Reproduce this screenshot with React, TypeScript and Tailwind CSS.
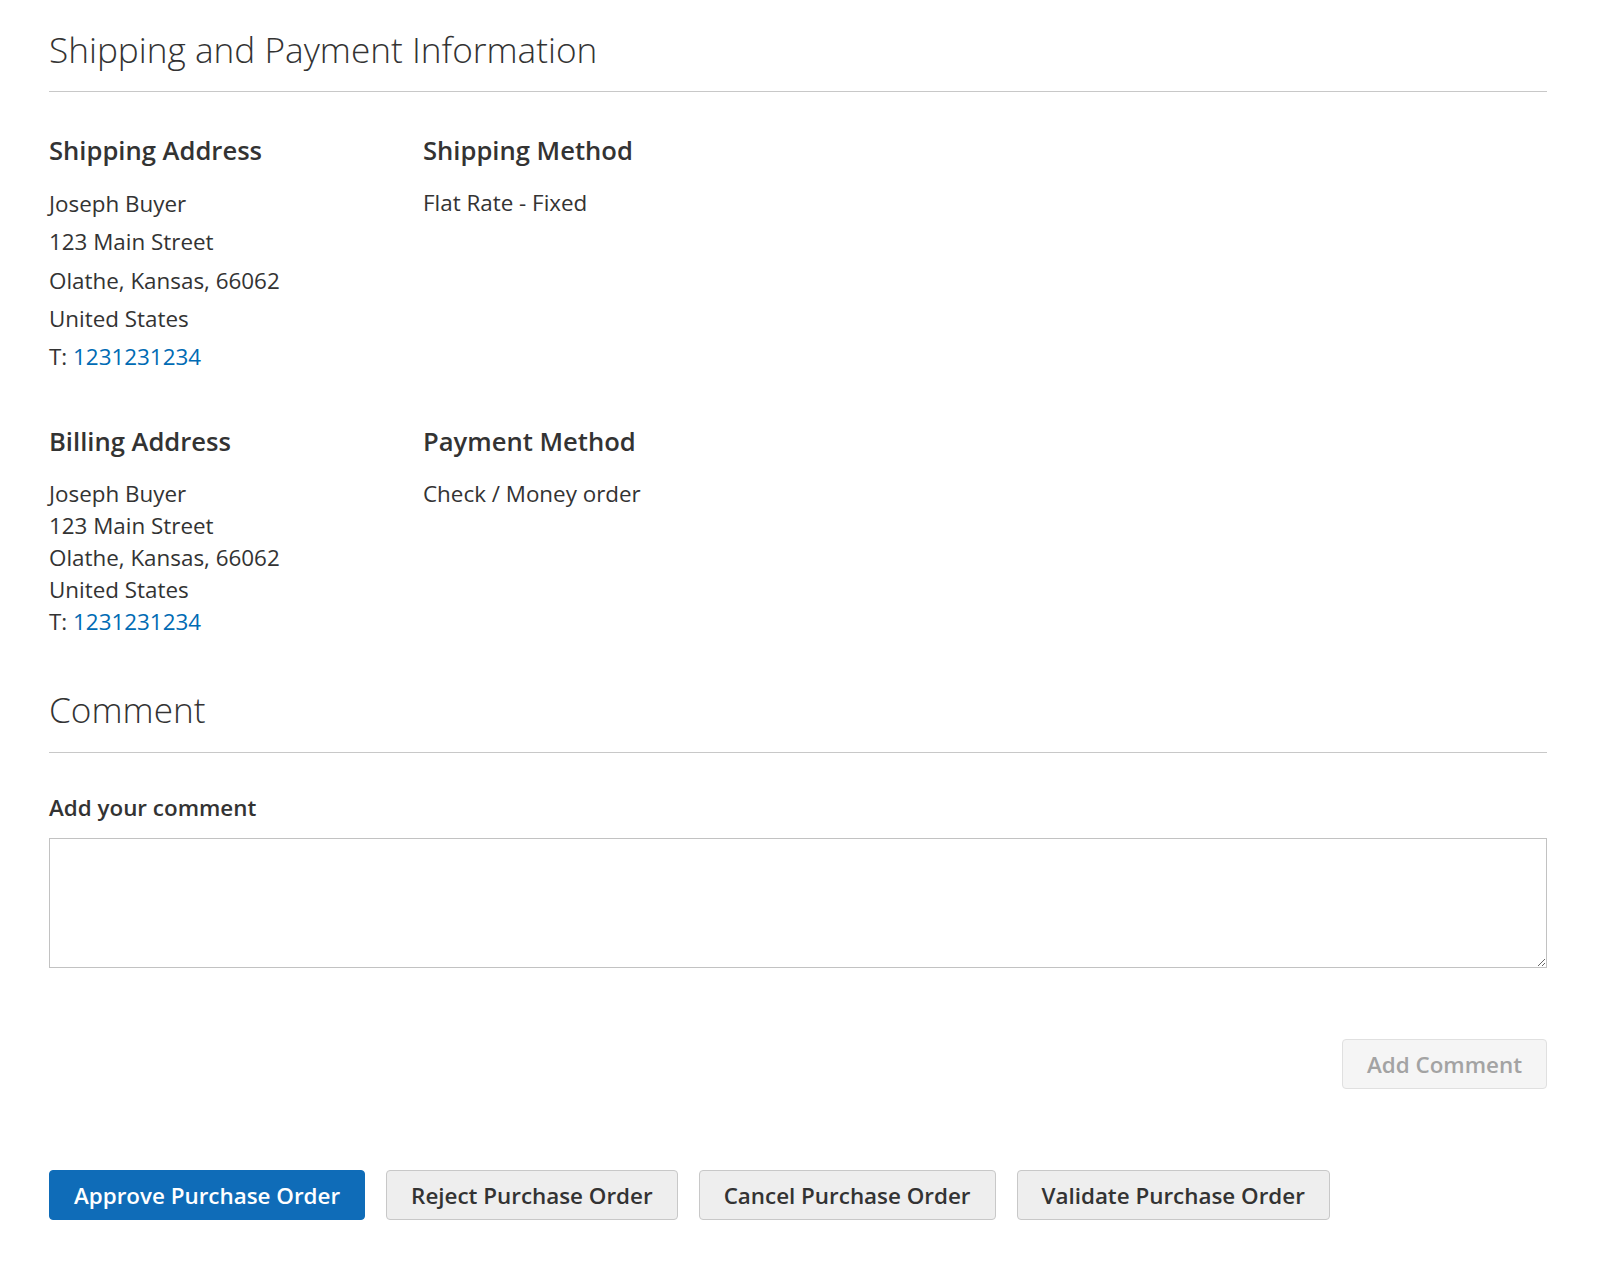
import React from "react";

const font = { fontFamily: '"Open Sans", "Noto Sans", Arial, sans-serif' };

const shipping = ["Joseph Buyer", "123 Main Street", "Olathe, Kansas, 66062", "United States"];

const btn = "h-[50px] px-[24px] rounded-[4px] border text-[22.4px] font-semibold";

export default function App() {
  return (
    <div className="min-h-screen bg-white text-[#333] pl-[49px] pr-[52px] pt-[25px]" style={font}>
      {/* Shipping and payment */}
      <div className="border-b border-[#c8c8c8] pb-[18px]">
        <h1 className="text-[35.2px] leading-[48px] font-light">Shipping and Payment Information</h1>
      </div>

      <div className="flex mt-[43px]">
        <div className="w-[374px]">
          <h2 className="text-[25.6px] leading-[32px] font-semibold">Shipping Address</h2>
          <div className="mt-[18px] text-[22.4px] leading-[38.3px]">
            {shipping.map((l) => (
              <div key={l}>{l}</div>
            ))}
            <div>
              T: <a className="text-[#006bb4]">1231231234</a>
            </div>
          </div>
        </div>
        <div>
          <h2 className="text-[25.6px] leading-[32px] font-semibold">Shipping Method</h2>
          <div className="mt-[17px] text-[22.4px] leading-[38px]">Flat Rate - Fixed</div>
        </div>
      </div>

      <div className="flex mt-[50px]">
        <div className="w-[374px]">
          <h2 className="text-[25.6px] leading-[32px] font-semibold">Billing Address</h2>
          <div className="mt-[20px] text-[22.4px] leading-[31.8px]">
            {shipping.map((l) => (
              <div key={l}>{l}</div>
            ))}
            <div>
              T: <a className="text-[#006bb4]">1231231234</a>
            </div>
          </div>
        </div>
        <div>
          <h2 className="text-[25.6px] leading-[32px] font-semibold">Payment Method</h2>
          <div className="mt-[20px] text-[22.4px] leading-[31.8px]">Check / Money order</div>
        </div>
      </div>

      {/* Comment */}
      <div className="mt-[48px] border-b border-[#c8c8c8] pb-[19px]">
        <h2 className="text-[35.2px] leading-[48px] font-light">Comment</h2>
      </div>

      <div className="mt-[40px] text-[22.4px] leading-[30px] font-semibold">Add your comment</div>
      <textarea className="mt-[15px] block w-full h-[130px] border border-[#c2c2c2] bg-white outline-none" />

      <div className="flex justify-end mt-[71px]">
        <button disabled className={`${btn} border-[#e0e0e0] bg-[#f5f5f5] text-[#a3a3a3]`}>
          Add Comment
        </button>
      </div>

      <div className="flex gap-[21px] mt-[81px]">
        <button className={`${btn} border-[#0f6cb8] bg-[#0f6cb8] text-white`}>Approve Purchase Order</button>
        <button className={`${btn} border-[#c8c8c8] bg-[#eeeeee] text-[#333]`}>Reject Purchase Order</button>
        <button className={`${btn} border-[#c8c8c8] bg-[#eeeeee] text-[#333]`}>Cancel Purchase Order</button>
        <button className={`${btn} border-[#c8c8c8] bg-[#eeeeee] text-[#333]`}>Validate Purchase Order</button>
      </div>
    </div>
  );
}
